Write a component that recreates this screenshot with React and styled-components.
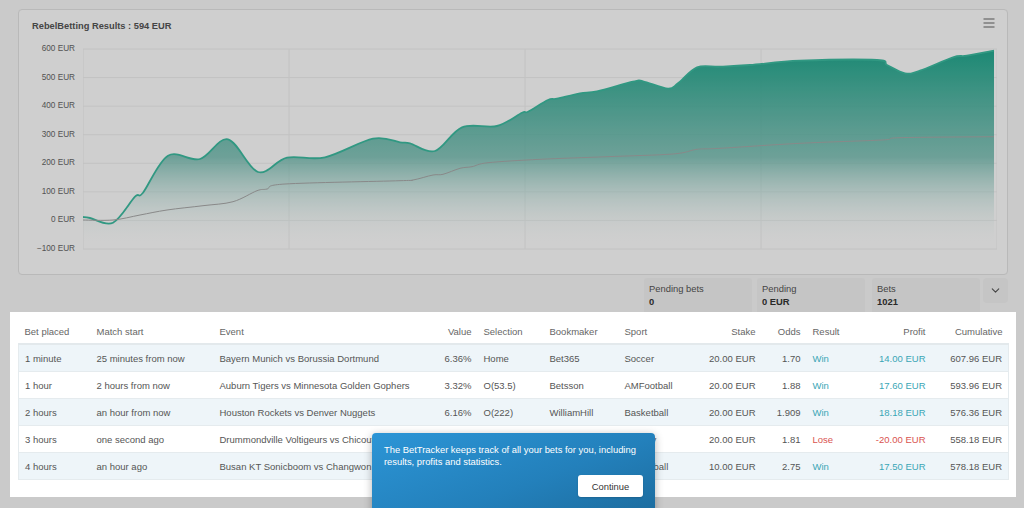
import React from "react";
import styled, { createGlobalStyle } from "styled-components";
import { ChevronDown } from "lucide-react";

const GlobalStyle = createGlobalStyle`
  html, body { margin: 0; padding: 0; background: #f9f9f9; }
  body {
    width: 1024px; height: 508px; overflow: hidden;
    font-family: "Liberation Sans", Arial, sans-serif;
  }
  * { box-sizing: border-box; }
`;

const Page = styled.div`
  position: relative;
  width: 1024px;
  height: 508px;
  overflow: hidden;
  padding-top: 9px;
  display: flex;
  flex-direction: column;
`;

const Overlay = styled.div`
  position: absolute;
  inset: 0;
  background: rgba(0, 0, 0, 0.19);
  z-index: 1;
`;

const ChartCard = styled.section`
  width: 990px;
  height: 266px;
  margin-left: 18px;
  background: #fff;
  border: 1px solid #e4e4e4;
  border-radius: 4px;
  padding: 9px 10px 19px 13px;
  display: flex;
  flex-direction: column;
  gap: 10px;
`;

const TitleRow = styled.div`
  display: flex;
  justify-content: space-between;
  align-items: flex-start;
  height: 14px;
`;

const Title = styled.h2`
  margin: 0;
  font-size: 9.3px;
  line-height: 14px;
  font-weight: bold;
  color: #555;
`;

const MenuIcon = styled.svg`
  margin-top: -1px;
  margin-right: 2px;
`;

const ChartBody = styled.div`
  display: flex;
  gap: 8px;
  height: 212px;
`;

const AxisLabels = styled.div`
  width: 43px;
  display: flex;
  flex-direction: column;
  justify-content: space-between;
  align-items: flex-end;
`;

const AxisLabel = styled.span`
  font-size: 8.2px;
  line-height: 12px;
  height: 12px;
  color: #666;
  white-space: nowrap;
`;

const StatsRow = styled.div`
  margin-top: 3px;
  padding-right: 16px;
  display: flex;
  justify-content: flex-end;
  align-items: flex-start;
  gap: 5px;
  height: 34px;
`;

const StatBox = styled.div`
  width: 108px;
  height: 34px;
  background: #f3f3f3;
  border-radius: 3px 3px 0 0;
  padding: 4px 5px;
  margin-right: ${(p) => p.$gap || 0}px;
`;

const StatLabel = styled.div`
  font-size: 9.4px;
  line-height: 13px;
  color: #555;
`;

const StatValue = styled.div`
  font-size: 9.4px;
  line-height: 13px;
  font-weight: bold;
  color: #333;
`;

const Toggle = styled.div`
  width: 25px;
  height: 25px;
  margin-left: -2px;
  background: #f3f3f3;
  border-radius: 4px;
  display: flex;
  align-items: center;
  justify-content: center;
  color: #555;
`;

const Panel = styled.section`
  position: relative;
  z-index: 2;
  width: 1006px;
  margin-left: 10px;
  background: #fff;
  padding: 7px 8px 17px;
`;

const Table = styled.table`
  width: 990px;
  border-collapse: collapse;
  table-layout: fixed;
  font-size: 9.5px;
`;

const Th = styled.th`
  height: 25px;
  padding: 0 6px;
  font-weight: normal;
  color: #666;
  text-align: ${(p) => (p.$right ? "right" : "left")};
  border-bottom: 2px solid #e3e9ec;
  white-space: nowrap;
`;

const Tr = styled.tr`
  background: ${(p) => (p.$alt ? "#eef5f9" : "#fff")};
  border-left: 1px solid #e5ebee;
  border-right: 1px solid #e5ebee;
  border-bottom: 1px solid #e5ebee;
`;

const Td = styled.td`
  height: 27px;
  padding: 1px 6px 0;
  color: ${(p) => (p.$tone === "win" ? "#3aa6b6" : p.$tone === "lose" ? "#d9534f" : "#555")};
  text-align: ${(p) => (p.$right ? "right" : "left")};
  white-space: nowrap;
  overflow: hidden;
`;

const Tooltip = styled.div`
  position: absolute;
  z-index: 3;
  left: 362px;
  top: 121px;
  width: 283px;
  height: 92px;
  border-radius: 4px;
  padding: 11px 12px;
  background: linear-gradient(160deg, #2c95d6 0%, #2380bb 55%, #1c6a9b 100%);
  box-shadow: 0 2px 8px rgba(0, 0, 0, 0.3);
  color: #fff;
  display: flex;
  flex-direction: column;
`;

const TipText = styled.p`
  margin: 0;
  font-size: 9.4px;
  line-height: 12px;
`;

const TipActions = styled.div`
  display: flex;
  justify-content: flex-end;
  margin-top: 7px;
`;

const ContinueButton = styled.button`
  width: 65px;
  height: 22px;
  border: none;
  border-radius: 3px;
  background: #fff;
  color: #333;
  font-family: inherit;
  font-size: 9.4px;
  box-shadow: 0 1px 2px rgba(0, 0, 0, 0.15);
`;

const columns = [
  { label: "Bet placed", w: 72 },
  { label: "Match start", w: 123 },
  { label: "Event", w: 207 },
  { label: "Value", w: 57, right: true },
  { label: "Selection", w: 66 },
  { label: "Bookmaker", w: 75 },
  { label: "Sport", w: 82 },
  { label: "Stake", w: 61, right: true },
  { label: "Odds", w: 45, right: true },
  { label: "Result", w: 54 },
  { label: "Profit", w: 71, right: true },
  { label: "Cumulative", w: 77, right: true },
];

const rows = [
  ["1 minute", "25 minutes from now", "Bayern Munich vs Borussia Dortmund", "6.36%", "Home", "Bet365", "Soccer", "20.00 EUR", "1.70", "Win", "14.00 EUR", "607.96 EUR"],
  ["1 hour", "2 hours from now", "Auburn Tigers vs Minnesota Golden Gophers", "3.32%", "O(53.5)", "Betsson", "AMFootball", "20.00 EUR", "1.88", "Win", "17.60 EUR", "593.96 EUR"],
  ["2 hours", "an hour from now", "Houston Rockets vs Denver Nuggets", "6.16%", "O(222)", "WilliamHill", "Basketball", "20.00 EUR", "1.909", "Win", "18.18 EUR", "576.36 EUR"],
  ["3 hours", "one second ago", "Drummondville Voltigeurs vs Chicoutimi", "2.94%", "O(5.5)", "Pinnacle", "Hockey", "20.00 EUR", "1.81", "Lose", "-20.00 EUR", "558.18 EUR"],
  ["4 hours", "an hour ago", "Busan KT Sonicboom vs Changwon LG", "4.12%", "Home", "Bet365", "Basketball", "10.00 EUR", "2.75", "Win", "17.50 EUR", "578.18 EUR"],
];

const teal = [
  [83, 217], [90, 218], [113, 222.7], [135, 196.7], [143, 192.7], [168, 155.7], [200, 159],
  [228, 139.3], [258, 172], [287, 157.7], [325, 157.3], [373, 138.7], [400, 142.3], [410, 143.3],
  [435, 151], [462, 127.3], [497, 126], [522, 112.7], [528, 111.7], [548, 100], [557, 98.7],
  [580, 93.3], [597, 91.3], [633, 81.7], [643, 81.3], [668, 88.7], [678, 83.3], [697, 67.3],
  [720, 66.7], [750, 65], [800, 60.7], [877, 60], [887, 65], [905, 73.3], [920, 70.7],
  [953, 57.3], [967, 55.7], [994, 50.7],
];

const gray = [
  [83, 220], [113, 220], [140, 215], [167, 210], [203, 205.7], [233, 201.7], [257, 190.7],
  [267, 189], [285, 184], [400, 180.7], [413, 180], [433, 175], [443, 174.3], [460, 168.3],
  [472, 166.7], [488, 162.7], [540, 159.3], [607, 156.7], [673, 154], [697, 149.3], [720, 148.3],
  [800, 143.3], [882, 140], [900, 137.7], [994, 136.7],
];

function smooth(pts) {
  let d = `M${pts[0][0]},${pts[0][1]}`;
  const t = 1 / 6;
  for (let i = 0; i < pts.length - 1; i++) {
    const p0 = pts[i - 1] || pts[i];
    const p1 = pts[i];
    const p2 = pts[i + 1];
    const p3 = pts[i + 2] || p2;
    const c1x = p1[0] + (p2[0] - p0[0]) * t;
    const c1y = p1[1] + (p2[1] - p0[1]) * t;
    const c2x = p2[0] - (p3[0] - p1[0]) * t;
    const c2y = p2[1] - (p3[1] - p1[1]) * t;
    d += ` C${c1x.toFixed(1)},${c1y.toFixed(1)} ${c2x.toFixed(1)},${c2y.toFixed(1)} ${p2[0]},${p2[1]}`;
  }
  return d;
}

const yLabels = ["600 EUR", "500 EUR", "400 EUR", "300 EUR", "200 EUR", "100 EUR", "0 EUR", "−100 EUR"];
const gridY = yLabels.map((_, i) => 49 + i * (200 / 7));
const gridX = [83, 289, 525, 761, 997];

function Chart() {
  const tealPath = smooth(teal);
  return (
    <svg width="914" height="212" viewBox="83 43 914 212">
      <defs>
        <linearGradient id="fillGrad" gradientUnits="userSpaceOnUse" x1="0" y1="50" x2="0" y2="245">
          <stop offset="0" stopColor="#22a98f" stopOpacity="1" />
          <stop offset="0.55" stopColor="#5fb3a5" stopOpacity="0.75" />
          <stop offset="1" stopColor="#ffffff" stopOpacity="0" />
        </linearGradient>
      </defs>
      {gridY.map((y) => (
        <line key={y} x1="83" x2="997" y1={y} y2={y} stroke="#f0f0f0" strokeWidth="1" />
      ))}
      {gridX.map((x) => (
        <line key={x} x1={x} x2={x} y1="49" y2="249" stroke="#f0f0f0" strokeWidth="1" />
      ))}
      <path d={`${tealPath} L994,249 L83,249 Z`} fill="url(#fillGrad)" />
      <path d={tealPath} fill="none" stroke="#3dbca1" strokeWidth="1.8" />
      <path d={smooth(gray)} fill="none" stroke="#a9a9a9" strokeWidth="1" />
    </svg>
  );
}

export default function App() {
  return (
    <Page>
      <GlobalStyle />
      <ChartCard>
        <TitleRow>
          <Title>RebelBetting Results : 594 EUR</Title>
          <MenuIcon width="12" height="10" viewBox="0 0 12 10">
            <path d="M0.5 1H11.5M0.5 5H11.5M0.5 9H11.5" stroke="#666" strokeWidth="1.2" />
          </MenuIcon>
        </TitleRow>
        <ChartBody>
          <AxisLabels>
            {yLabels.map((l) => (
              <AxisLabel key={l}>{l}</AxisLabel>
            ))}
          </AxisLabels>
          <Chart />
        </ChartBody>
      </ChartCard>
      <StatsRow>
        <StatBox>
          <StatLabel>Pending bets</StatLabel>
          <StatValue>0</StatValue>
        </StatBox>
        <StatBox $gap={2}>
          <StatLabel>Pending</StatLabel>
          <StatValue>0 EUR</StatValue>
        </StatBox>
        <StatBox>
          <StatLabel>Bets</StatLabel>
          <StatValue>1021</StatValue>
        </StatBox>
        <Toggle>
          <ChevronDown size={13} strokeWidth={2} />
        </Toggle>
      </StatsRow>
      <Overlay />
      <Panel>
        <Table>
          <colgroup>
            {columns.map((c) => (
              <col key={c.label} style={{ width: c.w }} />
            ))}
          </colgroup>
          <thead>
            <tr>
              {columns.map((c) => (
                <Th key={c.label} $right={c.right}>
                  {c.label}
                </Th>
              ))}
            </tr>
          </thead>
          <tbody>
            {rows.map((r, i) => (
              <Tr key={i} $alt={i % 2 === 0}>
                {r.map((v, j) => {
                  const tone = j === 9 || j === 10 ? (r[9] === "Win" ? "win" : "lose") : undefined;
                  return (
                    <Td key={j} $right={columns[j].right} $tone={tone}>
                      {v}
                    </Td>
                  );
                })}
              </Tr>
            ))}
          </tbody>
        </Table>
        <Tooltip>
          <TipText>
            The BetTracker keeps track of all your bets for you, including results, profits and statistics.
          </TipText>
          <TipActions>
            <ContinueButton>Continue</ContinueButton>
          </TipActions>
        </Tooltip>
      </Panel>
    </Page>
  );
}
